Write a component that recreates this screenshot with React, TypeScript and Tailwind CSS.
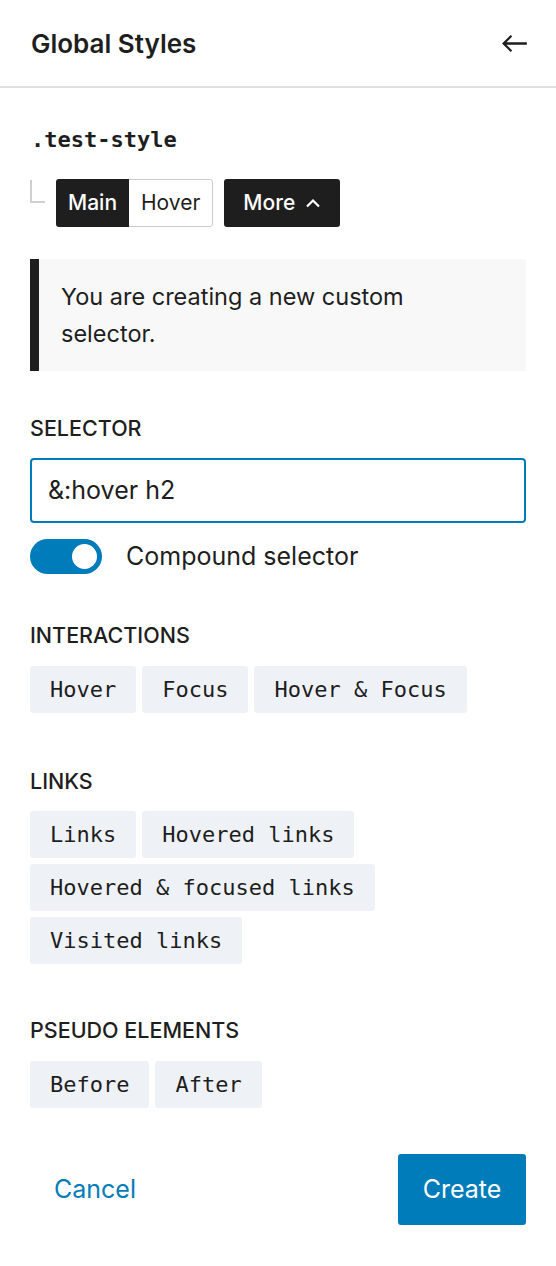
import * as React from 'react';

const sans = 'font-["Inter","Liberation_Sans",sans-serif]';
const mono = 'font-["DejaVu_Sans_Mono","Liberation_Mono",monospace]';

const Chip = ({ label }: { label: string }) => (
  <button
    className={`${mono} h-[47px] px-[20px] text-[22px] leading-none text-[#1e1e1e] bg-[#eef2f7] rounded-[3px]`}
  >
    {label}
  </button>
);

const SectionLabel = ({ children, className = '' }: { children: React.ReactNode; className?: string }) => (
  <div className={`h-[24px] leading-[24px] text-[21.5px] font-medium uppercase text-[#1e1e1e] ${className}`}>
    {children}
  </div>
);

export default function App() {
  return (
    <div className={`${sans} w-[556px] h-[1266px] bg-white text-[#1e1e1e] overflow-hidden`}>
      <div className="h-[88px] border-b-2 border-[#e0e0e0] flex items-center justify-between pl-[31px] pr-[23px]">
        <h2 className="text-[26px] font-semibold">Global Styles</h2>
        <svg width="37" height="37" viewBox="0 0 24 24" fill="#1e1e1e">
          <path d="M20 11.2H6.8l3.7-3.7-1-1L3.9 12l5.6 5.5 1-1-3.7-3.7H20z" />
        </svg>
      </div>

      <div className="px-[30px] flex flex-col">
        <div className={`${mono} mt-[38px] h-[28px] leading-[28px] text-[22px] font-bold pl-[1px]`}>.test-style</div>

        <div className="mt-[25px] flex items-start">
          <div className="mt-[1px] w-[15px] h-[23px] border-l-2 border-b-2 border-[#d0d0d0]" />
          <div className="ml-[11px] flex h-[48px] rounded-[3px] overflow-hidden">
            <button className="h-full px-[12px] bg-[#1e1e1e] text-white text-[21px] font-medium">Main</button>
            <button className="h-full px-[12px] bg-white text-[#1e1e1e] text-[21px] border border-l-0 border-[#cccccc] rounded-r-[3px]">
              Hover
            </button>
          </div>
          <button className="ml-[11px] h-[48px] px-[19px] bg-[#1e1e1e] text-white text-[21px] font-medium rounded-[3px] flex items-center gap-[10px]">
            More
            <svg width="16" height="10" viewBox="0 0 16 10" fill="none" stroke="white" strokeWidth="2.2">
              <polyline points="2,8.5 8,2.5 14,8.5" />
            </svg>
          </button>
        </div>

        <div className="mt-[32px] border-l-[9px] border-[#1e1e1e] bg-[#f8f8f8] py-[19px] pl-[22px] pr-[60px] text-[23.5px] leading-[37px]">
          You are creating a new custom selector.
        </div>

        <SectionLabel className="mt-[45px]">Selector</SectionLabel>
        <div className="mt-[18px] h-[65px] border-2 border-[#007cba] rounded-[4px] flex items-center pl-[16px] text-[25px]">
          &amp;:hover h2
        </div>

        <div className="mt-[16px] flex items-center h-[35px]">
          <div className="w-[72px] h-[35px] rounded-full bg-[#007cba] flex items-center justify-end pr-[5px]">
            <div className="w-[25px] h-[25px] rounded-full bg-white" />
          </div>
          <span className="ml-[24px] text-[25px]">Compound selector</span>
        </div>

        <SectionLabel className="mt-[49px]">Interactions</SectionLabel>
        <div className="mt-[19px] flex flex-wrap gap-[6px]">
          <Chip label="Hover" />
          <Chip label="Focus" />
          <Chip label="Hover & Focus" />
        </div>

        <SectionLabel className="mt-[56px]">Links</SectionLabel>
        <div className="mt-[18px] flex flex-wrap gap-[6px] w-[400px]">
          <Chip label="Links" />
          <Chip label="Hovered links" />
          <Chip label="Hovered & focused links" />
          <Chip label="Visited links" />
        </div>

        <SectionLabel className="mt-[54px]">Pseudo elements</SectionLabel>
        <div className="mt-[19px] flex flex-wrap gap-[6px]">
          <Chip label="Before" />
          <Chip label="After" />
        </div>

        <div className="mt-[46px] flex items-center justify-between">
          <button className="h-[71px] px-[24px] text-[25px] text-[#007cba]">Cancel</button>
          <button className="h-[71px] w-[128px] text-[25px] text-white bg-[#007cba] rounded-[3px]">Create</button>
        </div>
      </div>
    </div>
  );
}
